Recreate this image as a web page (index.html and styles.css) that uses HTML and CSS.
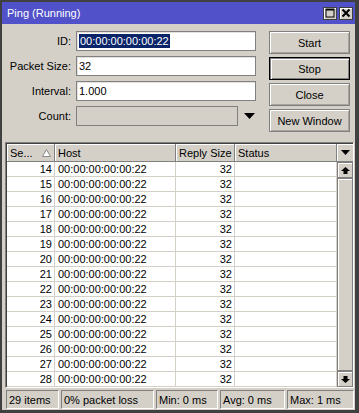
FILE: index.html
```html
<!DOCTYPE html>
<html lang="en">
<head>
    <meta charset="UTF-8">
    <title>Ping (Running)</title>
    <link rel="stylesheet" href="styles.css">
</head>
<body>
<div class="window">
    <div class="titlebar">
        <span class="title">Ping (Running)</span>
        <div class="title-btns">
            <div class="tbtn"><svg width="10" height="10" viewBox="0 0 10 10"><rect x="1" y="1" width="8" height="8" fill="none" stroke="#000" stroke-width="1"/><rect x="1" y="1" width="8" height="1.5" fill="#000"/></svg></div>
            <div class="tbtn"><svg width="10" height="10" viewBox="0 0 10 10"><path d="M1.5 1.5 L8.5 8.5 M8.5 1.5 L1.5 8.5" stroke="#000" stroke-width="2"/></svg></div>
        </div>
    </div>

    <div class="content">
        <div class="top">
            <div class="form">
                <div class="frow">
                    <label>ID:</label>
                    <div class="field"><span class="sel">00:00:00:00:00:22</span></div>
                </div>
                <div class="frow">
                    <label>Packet Size:</label>
                    <div class="field">32</div>
                </div>
                <div class="frow">
                    <label>Interval:</label>
                    <div class="field">1.000</div>
                </div>
                <div class="frow">
                    <label>Count:</label>
                    <div class="field disabled short"></div>
                    <svg class="drop" width="11" height="6" viewBox="0 0 11 6"><path d="M0 0 H11 L5.5 6 Z" fill="#000"/></svg>
                </div>
            </div>
            <div class="buttons">
                <div class="btn">Start</div>
                <div class="btn default">Stop</div>
                <div class="btn">Close</div>
                <div class="btn">New Window</div>
            </div>
        </div>

        <div class="table">
            <div class="thead">
                <div class="th seq">Se...<svg class="sort" width="9" height="8" viewBox="0 0 9 8"><path d="M4.5 0.5 L8.5 7.5 H0.5 Z" fill="#fff" stroke="#8a8a8a"/></svg></div>
                <div class="th">Host</div>
                <div class="th">Reply Size</div>
                <div class="th">Status</div>
                <div class="th menu"><svg width="9" height="5" viewBox="0 0 9 5"><path d="M0 0 H9 L4.5 5 Z" fill="#000"/></svg></div>
            </div>
            <div class="tbody">
                <div class="rows">
                    <div class="row"><div class="td num">14</div><div class="td">00:00:00:00:00:22</div><div class="td num">32</div><div class="td"></div></div>
                    <div class="row"><div class="td num">15</div><div class="td">00:00:00:00:00:22</div><div class="td num">32</div><div class="td"></div></div>
                    <div class="row"><div class="td num">16</div><div class="td">00:00:00:00:00:22</div><div class="td num">32</div><div class="td"></div></div>
                    <div class="row"><div class="td num">17</div><div class="td">00:00:00:00:00:22</div><div class="td num">32</div><div class="td"></div></div>
                    <div class="row"><div class="td num">18</div><div class="td">00:00:00:00:00:22</div><div class="td num">32</div><div class="td"></div></div>
                    <div class="row"><div class="td num">19</div><div class="td">00:00:00:00:00:22</div><div class="td num">32</div><div class="td"></div></div>
                    <div class="row"><div class="td num">20</div><div class="td">00:00:00:00:00:22</div><div class="td num">32</div><div class="td"></div></div>
                    <div class="row"><div class="td num">21</div><div class="td">00:00:00:00:00:22</div><div class="td num">32</div><div class="td"></div></div>
                    <div class="row"><div class="td num">22</div><div class="td">00:00:00:00:00:22</div><div class="td num">32</div><div class="td"></div></div>
                    <div class="row"><div class="td num">23</div><div class="td">00:00:00:00:00:22</div><div class="td num">32</div><div class="td"></div></div>
                    <div class="row"><div class="td num">24</div><div class="td">00:00:00:00:00:22</div><div class="td num">32</div><div class="td"></div></div>
                    <div class="row"><div class="td num">25</div><div class="td">00:00:00:00:00:22</div><div class="td num">32</div><div class="td"></div></div>
                    <div class="row"><div class="td num">26</div><div class="td">00:00:00:00:00:22</div><div class="td num">32</div><div class="td"></div></div>
                    <div class="row"><div class="td num">27</div><div class="td">00:00:00:00:00:22</div><div class="td num">32</div><div class="td"></div></div>
                    <div class="row"><div class="td num">28</div><div class="td">00:00:00:00:00:22</div><div class="td num">32</div><div class="td"></div></div>
                </div>
                <div class="scrollbar">
                    <div class="sbtn"><svg width="9" height="7" viewBox="0 0 9 7"><path d="M4.5 0 L9 4 H6.5 V7 H2.5 V4 H0 Z" fill="#000"/></svg></div>
                    <div class="track"><div class="thumb"></div></div>
                    <div class="sbtn"><svg width="9" height="7" viewBox="0 0 9 7"><path d="M4.5 7 L9 3 H6.5 V0 H2.5 V3 H0 Z" fill="#000"/></svg></div>
                </div>
            </div>
        </div>

        <div class="statusbar">
            <div class="seg s1">29 items</div>
            <div class="seg s2">0% packet loss</div>
            <div class="seg s3">Min: 0 ms</div>
            <div class="seg s4">Avg: 0 ms</div>
            <div class="seg s5">Max: 1 ms</div>
        </div>
    </div>
</div>
</body>
</html>
```

FILE: styles.css
```css
* {
    box-sizing: border-box;
}

body {
    margin: 0;
    font-family: "Liberation Sans", Arial, sans-serif;
    font-size: 11px;
    color: #000;
    background: #d4d0c8;
}

.window {
    width: 359px;
    height: 413px;
    background: #d4d0c8;
    border: 2px solid #404040;
    border-right-width: 4px;
    border-bottom-width: 3px;
    display: flex;
    flex-direction: column;
}

/* Title bar */
.titlebar {
    height: 22px;
    background: #5151c9;
    color: #fff;
    display: flex;
    align-items: center;
    justify-content: space-between;
    padding: 0 2px 0 5px;
    font-size: 11px;
}

.title-btns {
    display: flex;
    gap: 2px;
}

.tbtn {
    width: 14px;
    height: 13px;
    background: #d4d0c8;
    border: 1px solid #404040;
    box-shadow: inset 1px 1px 0 #fff;
    display: flex;
    align-items: center;
    justify-content: center;
}

/* Form + buttons */
.content {
    flex: 1;
    display: flex;
    flex-direction: column;
    padding: 0 1px 0 3px;
}

.top {
    display: flex;
    padding-top: 7px;
    height: 118px;
}

.form {
    width: 255px;
    display: flex;
    flex-direction: column;
    gap: 5px;
}

.frow {
    display: flex;
    align-items: center;
    height: 20px;
}

.frow label {
    width: 66px;
    text-align: right;
    margin-right: 5px;
    white-space: nowrap;
}

.field {
    width: 180px;
    height: 20px;
    background: #fff;
    border: 1px solid #808080;
    box-shadow: inset 1px 1px 0 #e4e2dc;
    padding: 2px 2px 0 2px;
    line-height: 14px;
    white-space: nowrap;
}

.field.disabled {
    background: #d4d0c8;
    box-shadow: none;
}

.field.short {
    width: 162px;
}

.sel {
    background: #0a246a;
    color: #fff;
    display: inline-block;
    padding: 0 1px;
}

.drop {
    margin-left: 6px;
}

.buttons {
    margin-left: 9px;
    width: 81px;
    display: flex;
    flex-direction: column;
    gap: 3px;
}

.btn {
    height: 23px;
    border: 1px solid #808080;
    box-shadow: inset 1px 1px 0 #fff, inset -1px -1px 0 #a8a49c;
    display: flex;
    align-items: center;
    justify-content: center;
}

.btn.default {
    border: 1px solid #000;
    box-shadow: inset 1px 1px 0 #808080, inset 2px 2px 0 #fff, inset -1px -1px 0 #808080;
}

/* Table */
.table {
    border: 1px solid #808080;
    border-right-color: #fff;
    border-bottom-color: #fff;
    box-shadow: inset 1px 1px 0 #404040;
    padding: 1px 0 0 1px;
    background: #fff;
}

.thead {
    display: grid;
    grid-template-columns: 48px 121px 59px 1fr 16px;
    height: 18px;
    background: #d4d0c8;
}

.th {
    position: relative;
    padding: 2px 3px 0 3px;
    border-right: 1px solid #808080;
    border-bottom: 1px solid #808080;
    box-shadow: inset 1px 1px 0 #fff;
    white-space: nowrap;
    line-height: 14px;
}

.th.seq {
    display: flex;
    justify-content: space-between;
    align-items: center;
    padding-top: 0;
}

.sort {
    margin-right: 0;
}

.th.menu {
    border-right: none;
    display: flex;
    align-items: center;
    justify-content: center;
    padding: 0;
}

.tbody {
    display: flex;
}

.rows {
    flex: 1;
}

.row {
    display: grid;
    grid-template-columns: 48px 121px 59px 1fr;
    height: 15px;
    border-bottom: 1px solid #d4d0c8;
}

.td {
    border-right: 1px solid #d4d0c8;
    padding: 0 2px 0 3px;
    line-height: 14px;
    white-space: nowrap;
}

.td.num {
    text-align: right;
}

.scrollbar {
    width: 16px;
    display: flex;
    flex-direction: column;
    background: #d4d0c8;
}

.sbtn {
    height: 16px;
    border: 1px solid #808080;
    box-shadow: inset 1px 1px 0 #fff;
    display: flex;
    align-items: center;
    justify-content: center;
}

.track {
    flex: 1;
    display: flex;
    flex-direction: column;
    justify-content: flex-end;
}

.thumb {
    height: 100%;
    border: 1px solid #808080;
    box-shadow: inset 1px 1px 0 #fff;
}

/* Status bar */
.statusbar {
    display: flex;
    gap: 2px;
    margin-top: 2px;
    height: 19px;
    padding-left: 1px;
}

.seg {
    border: 1px solid #808080;
    border-right-color: #fff;
    border-bottom-color: #fff;
    padding: 2px 3px 0 2px;
    line-height: 14px;
    white-space: nowrap;
}

.s1 { width: 53px; }
.s2 { width: 93px; }
.s3 { width: 62px; }
.s4 { width: 65px; }
.s5 { flex: 1; }
```
